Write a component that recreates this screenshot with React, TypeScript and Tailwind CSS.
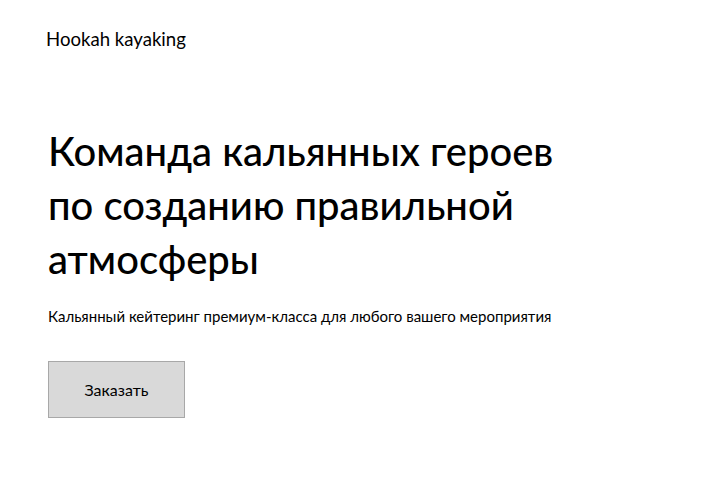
export default function App() {
  return (
    <div className="min-h-[480px] bg-white font-['Lato',sans-serif] text-black">
      <header className="px-[46px] pt-[28px]">
        <span className="text-[18.6px] leading-[22px]">Hookah kayaking</span>
      </header>
      <main className="px-[48px] pt-[72px]">
        <h1 className="text-[40px] leading-[54px] font-medium">
          Команда кальянных героев
          <br />
          по созданию правильной
          <br />
          атмосферы
        </h1>
        <p className="mt-[21px] text-[15px] leading-[18px]">
          Кальянный кейтеринг премиум-класса для любого вашего мероприятия
        </p>
        <button
          type="button"
          className="mt-[36px] h-[57px] w-[137px] border border-[#a8a8a8] bg-[#d9d9d9] text-[16px]"
        >
          Заказать
        </button>
      </main>
    </div>
  );
}
